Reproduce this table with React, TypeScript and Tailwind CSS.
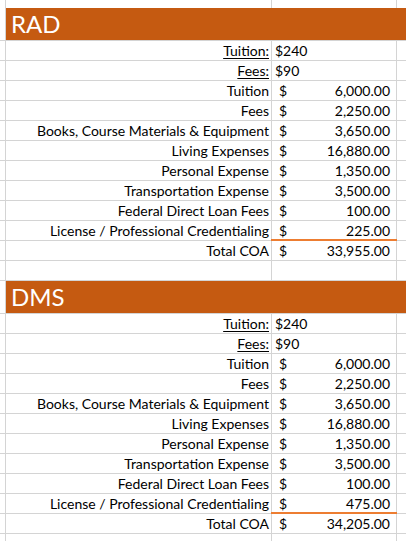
import React from "react";

type Item = [string, string];

const costs = (license: string, total: string): Item[] => [
  ["Tuition", "6,000.00"],
  ["Fees", "2,250.00"],
  ["Books, Course Materials & Equipment", "3,650.00"],
  ["Living Expenses", "16,880.00"],
  ["Personal Expense", "1,350.00"],
  ["Transportation Expense", "3,500.00"],
  ["Federal Direct Loan Fees", "100.00"],
  ["License / Professional Credentialing", license],
  ["Total COA", total],
];

function Row({
  label,
  underline,
  children,
  orangeLine,
}: {
  label?: string;
  underline?: boolean;
  children?: React.ReactNode;
  orangeLine?: boolean;
}) {
  return (
    <div className="flex h-[20px] border-b border-[#d4d4d4]">
      <div className="w-[6px] shrink-0 border-r border-[#d4d4d4]" />
      <div className="w-[266px] shrink-0 border-r border-[#d4d4d4] flex items-end justify-end pr-[2px] pb-[1px]">
        {label && (
          <span className={underline ? "underline underline-offset-[2px] decoration-1" : ""}>{label}</span>
        )}
      </div>
      <div className="w-[125px] shrink-0 border-r border-[#d4d4d4] relative flex items-end pb-[1px]">
        {children}
        {orangeLine && (
          <div className="absolute left-[-1px] right-[-1px] bottom-[-1px] h-[2px] bg-[#ed7d31]" />
        )}
      </div>
      <div className="flex-1" />
    </div>
  );
}

function Money({ v }: { v: string }) {
  return (
    <div className="flex w-full justify-between pl-[7px] pr-[6px]">
      <span>$</span>
      <span>{v}</span>
    </div>
  );
}

function Section({ title, license, total }: { title: string; license: string; total: string }) {
  const items = costs(license, total);
  return (
    <div>
      <div className="flex h-[33px] border-b border-[#d4d4d4]">
        <div className="w-[6px] shrink-0 border-r border-[#d4d4d4]" />
        <div className="flex-1 bg-[#c55a11] flex items-end pl-[5px] pb-[2px]">
          <span className="text-white text-[24px] leading-[28px]">{title}</span>
        </div>
      </div>
      <Row label="Tuition:" underline>
        <span className="pl-[3px]">$240</span>
      </Row>
      <Row label="Fees:" underline>
        <span className="pl-[3px]">$90</span>
      </Row>
      {items.map(([l, v], i) => (
        <Row key={l} label={l} orangeLine={i === 7}>
          <Money v={v} />
        </Row>
      ))}
      <Row />
    </div>
  );
}

export default function App() {
  return (
    <div className="w-[406px] h-[541px] overflow-hidden bg-white text-black font-['Lato',sans-serif] text-[14px] leading-[16px]">
      <div className="flex h-[8px]">
        <div className="w-[6px] shrink-0 border-r border-[#d4d4d4]" />
        <div className="w-[266px] shrink-0 border-r border-[#d4d4d4]" />
        <div className="w-[125px] shrink-0 border-r border-[#d4d4d4]" />
        <div className="flex-1" />
      </div>
      <Section title="RAD" license="225.00" total="33,955.00" />
      <Section title="DMS" license="475.00" total="34,205.00" />
    </div>
  );
}
